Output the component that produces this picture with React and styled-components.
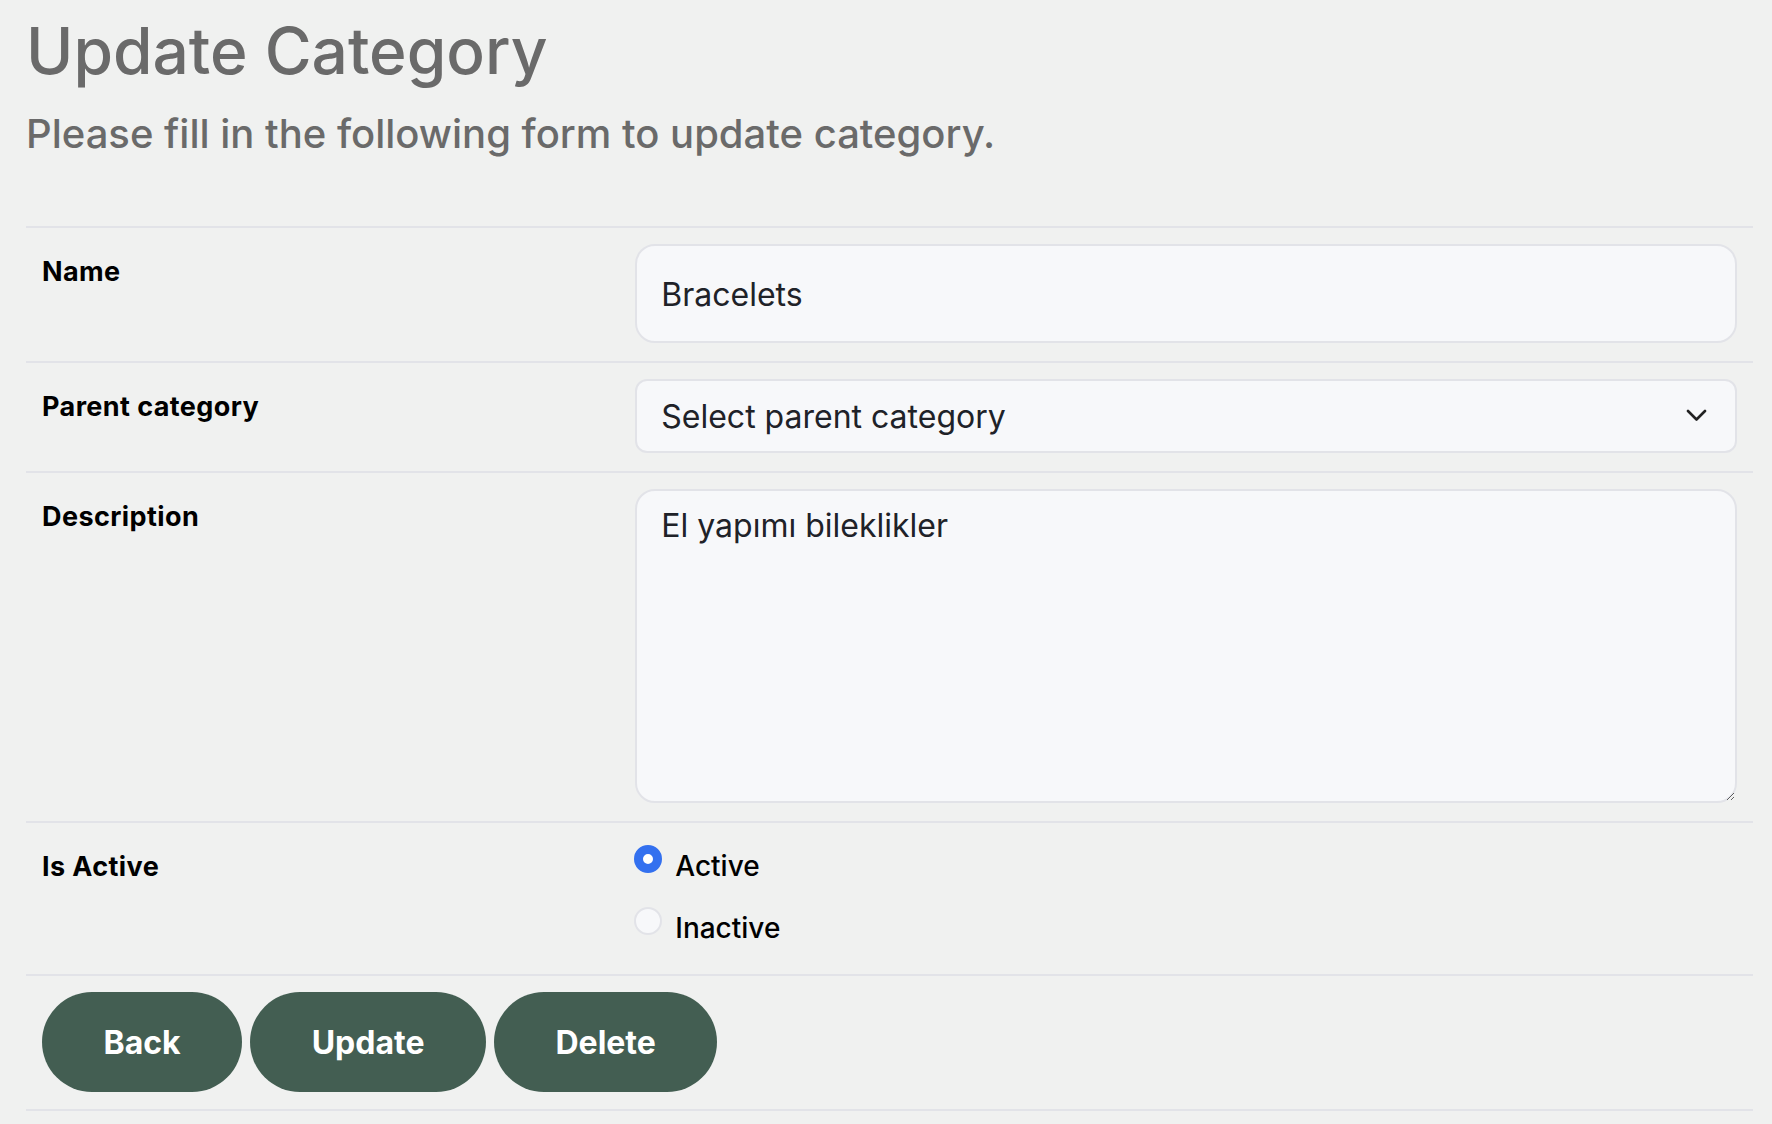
import React, { useState } from "react";
import styled, { createGlobalStyle } from "styled-components";

const GlobalStyle = createGlobalStyle`
  html, body {
    margin: 0;
    padding: 0;
    background: #f0f1f0;
  }
  body {
    font-family: Inter, "Noto Sans", sans-serif;
  }
  * { box-sizing: border-box; }
`;

const Page = styled.div`
  padding: 12px 19px 0 26px;
`;

const Title = styled.h1`
  margin: 0;
  font-size: 64px;
  line-height: 77px;
  font-weight: 500;
  color: #6a6a6a;
`;

const Subtitle = styled.p`
  margin: 21px 0 0;
  font-size: 40px;
  line-height: 48px;
  font-weight: 500;
  color: #6a6a6a;
`;

const Form = styled.form`
  margin-top: 68px;
  border-bottom: 2px solid #e2e3e8;
`;

const Row = styled.div`
  display: grid;
  grid-template-columns: 35fr 65fr;
  padding: 16px 16px 18px;
  border-top: 2px solid #e2e3e8;
`;

const Label = styled.label`
  padding-top: 12px;
  font-size: 27px;
  line-height: 32px;
  font-weight: 700;
  letter-spacing: 0.4px;
  color: #000;
`;

const fieldBase = `
  width: 100%;
  border: 2px solid #e2e3e8;
  background: #f7f8fa;
  color: #202228;
  font-family: Inter, "Noto Sans", sans-serif;
  font-size: 32px;
  outline: none;
`;

const TextInput = styled.input`
  ${fieldBase}
  height: 99px;
  padding: 2px 24px 0;
  border-radius: 20px;
`;

const SelectWrap = styled.div`
  position: relative;
`;

const Select = styled.select`
  ${fieldBase}
  appearance: none;
  height: 74px;
  padding: 0 60px 0 24px;
  border-radius: 12px;
`;

const Chevron = styled.svg`
  position: absolute;
  right: 30px;
  top: 50%;
  width: 21px;
  height: 12px;
  margin-top: -7px;
  pointer-events: none;
`;

const TextArea = styled.textarea`
  ${fieldBase}
  display: block;
  height: 314px;
  padding: 15px 24px 14px;
  line-height: 39px;
  border-radius: 20px;
  resize: vertical;
`;

const RadioGroup = styled.div`
  display: flex;
  flex-direction: column;
  gap: 22px;
  padding: 7px 0 8px;
`;

const RadioOption = styled.label`
  display: flex;
  align-items: flex-start;
  gap: 13px;
  font-size: 28px;
  line-height: 40px;
  font-weight: 500;
  color: #000;
  cursor: pointer;
`;

const Radio = styled.input`
  appearance: none;
  margin: -1px 0 0 -1px;
  width: 28px;
  height: 28px;
  flex: none;
  border-radius: 50%;
  border: 2px solid #e2e3e8;
  background: #f7f8fa;
  &:checked {
    border: 9px solid #3370ef;
    background: #fff;
  }
`;

const ButtonRow = styled.div`
  display: flex;
  gap: 8px;
  padding: 16px 16px 17px;
  border-top: 2px solid #e2e3e8;
`;

const Button = styled.button`
  height: 100px;
  padding: 0 61.5px;
  border: none;
  border-radius: 50px;
  background: #435e52;
  color: #fff;
  font-family: Inter, "Noto Sans", sans-serif;
  font-size: 32px;
  font-weight: 700;
  cursor: pointer;
`;

export default function App() {
  const [active, setActive] = useState("active");
  return (
    <Page>
      <GlobalStyle />
      <Title>Update Category</Title>
      <Subtitle>Please fill in the following form to update category.</Subtitle>
      <Form onSubmit={(e) => e.preventDefault()}>
        <Row>
          <Label htmlFor="name">Name</Label>
          <TextInput id="name" defaultValue="Bracelets" />
        </Row>
        <Row>
          <Label htmlFor="parent">Parent category</Label>
          <SelectWrap>
            <Select id="parent" defaultValue="">
              <option value="">Select parent category</option>
            </Select>
            <Chevron viewBox="0 0 21 12" fill="none">
              <path d="M2 2l8.5 8.5L19 2" stroke="#222" strokeWidth="2.6" strokeLinecap="round" strokeLinejoin="round" />
            </Chevron>
          </SelectWrap>
        </Row>
        <Row>
          <Label htmlFor="desc">Description</Label>
          <TextArea id="desc" defaultValue="El yapımı bileklikler" />
        </Row>
        <Row>
          <Label>Is Active</Label>
          <RadioGroup>
            <RadioOption>
              <Radio type="radio" name="active" checked={active === "active"} onChange={() => setActive("active")} />
              Active
            </RadioOption>
            <RadioOption>
              <Radio type="radio" name="active" checked={active === "inactive"} onChange={() => setActive("inactive")} />
              Inactive
            </RadioOption>
          </RadioGroup>
        </Row>
        <ButtonRow>
          <Button type="button">Back</Button>
          <Button type="button">Update</Button>
          <Button type="button">Delete</Button>
        </ButtonRow>
      </Form>
    </Page>
  );
}
